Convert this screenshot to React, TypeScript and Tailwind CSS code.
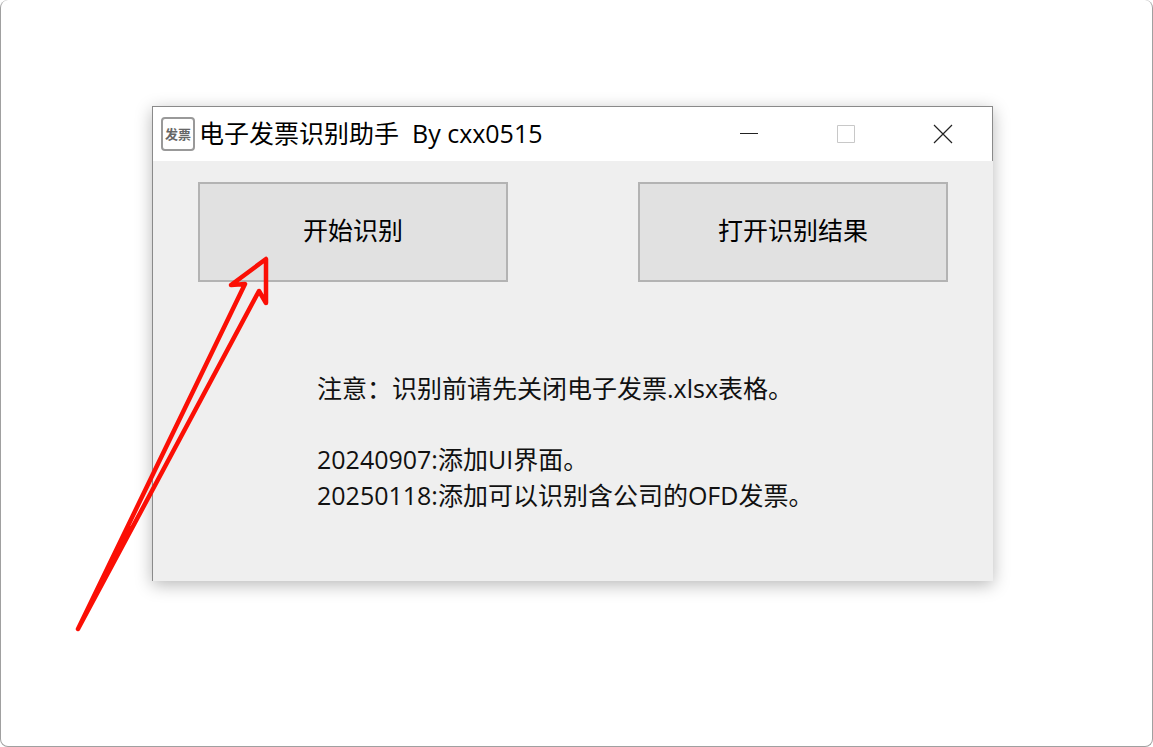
import React from 'react';

interface ActionButtonProps {
  label: string;
  onClick?: () => void;
}

const ActionButton: React.FC<ActionButtonProps> = ({ label, onClick }) => (
  <button
    type="button"
    onClick={onClick}
    className="h-[100px] w-[310px] border-2 border-[#b3b3b3] bg-[#e1e1e1] pb-1 hover:bg-[#e5f1fb]"
  >
    {label}
  </button>
);

const AppIcon = () => (
  <span className="flex h-[34px] w-[34px] shrink-0 items-center justify-center rounded-[4px] border-2 border-[#999] bg-white text-[13px] leading-none font-bold text-[#666]">
    发票
  </span>
);

const TitleBar = () => (
  <header className="flex h-[54px] items-center border-r border-[#8a8a8a] bg-white pl-2">
    <AppIcon />
    <h1 className="ml-1 grow pb-0.5 whitespace-pre">电子发票识别助手  By cxx0515</h1>
    <div className="flex h-full pr-px">
      <button type="button" aria-label="最小化" className="flex w-[97px] items-center justify-center">
        <svg width="20" height="20" viewBox="0 0 20 20" stroke="#222" fill="none">
          <path d="M1 9.500H19" />
        </svg>
      </button>
      <button type="button" aria-label="最大化" disabled className="flex w-[97px] items-center justify-center">
        <svg width="20" height="20" viewBox="0 0 20 20" stroke="#c8c8c8" fill="none">
          <path d="M1.500 1.500H18.500V18.500H1.500Z" />
        </svg>
      </button>
      <button type="button" aria-label="关闭" className="flex w-[97px] items-center justify-center">
        <svg width="20" height="20" viewBox="0 0 20 20" stroke="#222" strokeWidth="1.200" fill="none">
          <path d="M1 1L19 19M19 1L1 19" />
        </svg>
      </button>
    </div>
  </header>
);

// Hand-drawn style pointer towards the start button
const Arrow = () => (
  <svg
    className="pointer-events-none absolute top-[143px] -left-[83px]"
    width="210"
    height="390"
    viewBox="70 250 210 390"
    fill="none"
    stroke="#fb0f05"
    strokeWidth="4.500"
    strokeLinejoin="round"
    strokeLinecap="round"
    aria-hidden="true"
  >
    <path d="M78 629L245 284L231 285L266 259V303L259 291Z" />
    <path d="M78 629L128 526L133 526Z" fill="#fb0f05" stroke="none" />
  </svg>
);

const App: React.FC = () => {
  return (
    <div className="min-h-screen rounded-lg border border-t-0 border-[#a0a0a0] bg-white pt-[106px] pr-[159px] pb-[100px] pl-[151px] font-['Open_Sans','Noto_Sans_CJK_SC',sans-serif] text-[25px] leading-[36px] text-black">
      <div className="relative border-t border-l border-[#8a8a8a] bg-[#efefef] shadow-[0_4px_16px_rgba(0,0,0,0.28)]">
        <TitleBar />
        <main className="px-[45px] pt-[21px] pb-[68px]">
          <div className="flex justify-between">
            <ActionButton label="开始识别" />
            <ActionButton label="打开识别结果" />
          </div>
          <div className="mt-[88px] pl-[119px] text-[#111]">
            <p>注意：识别前请先关闭电子发票.xlsx表格。</p>
            <p className="mt-[35px]">20240907:添加UI界面。</p>
            <p>20250118:添加可以识别含公司的OFD发票。</p>
          </div>
        </main>
        <Arrow />
      </div>
    </div>
  );
};

export default App;
